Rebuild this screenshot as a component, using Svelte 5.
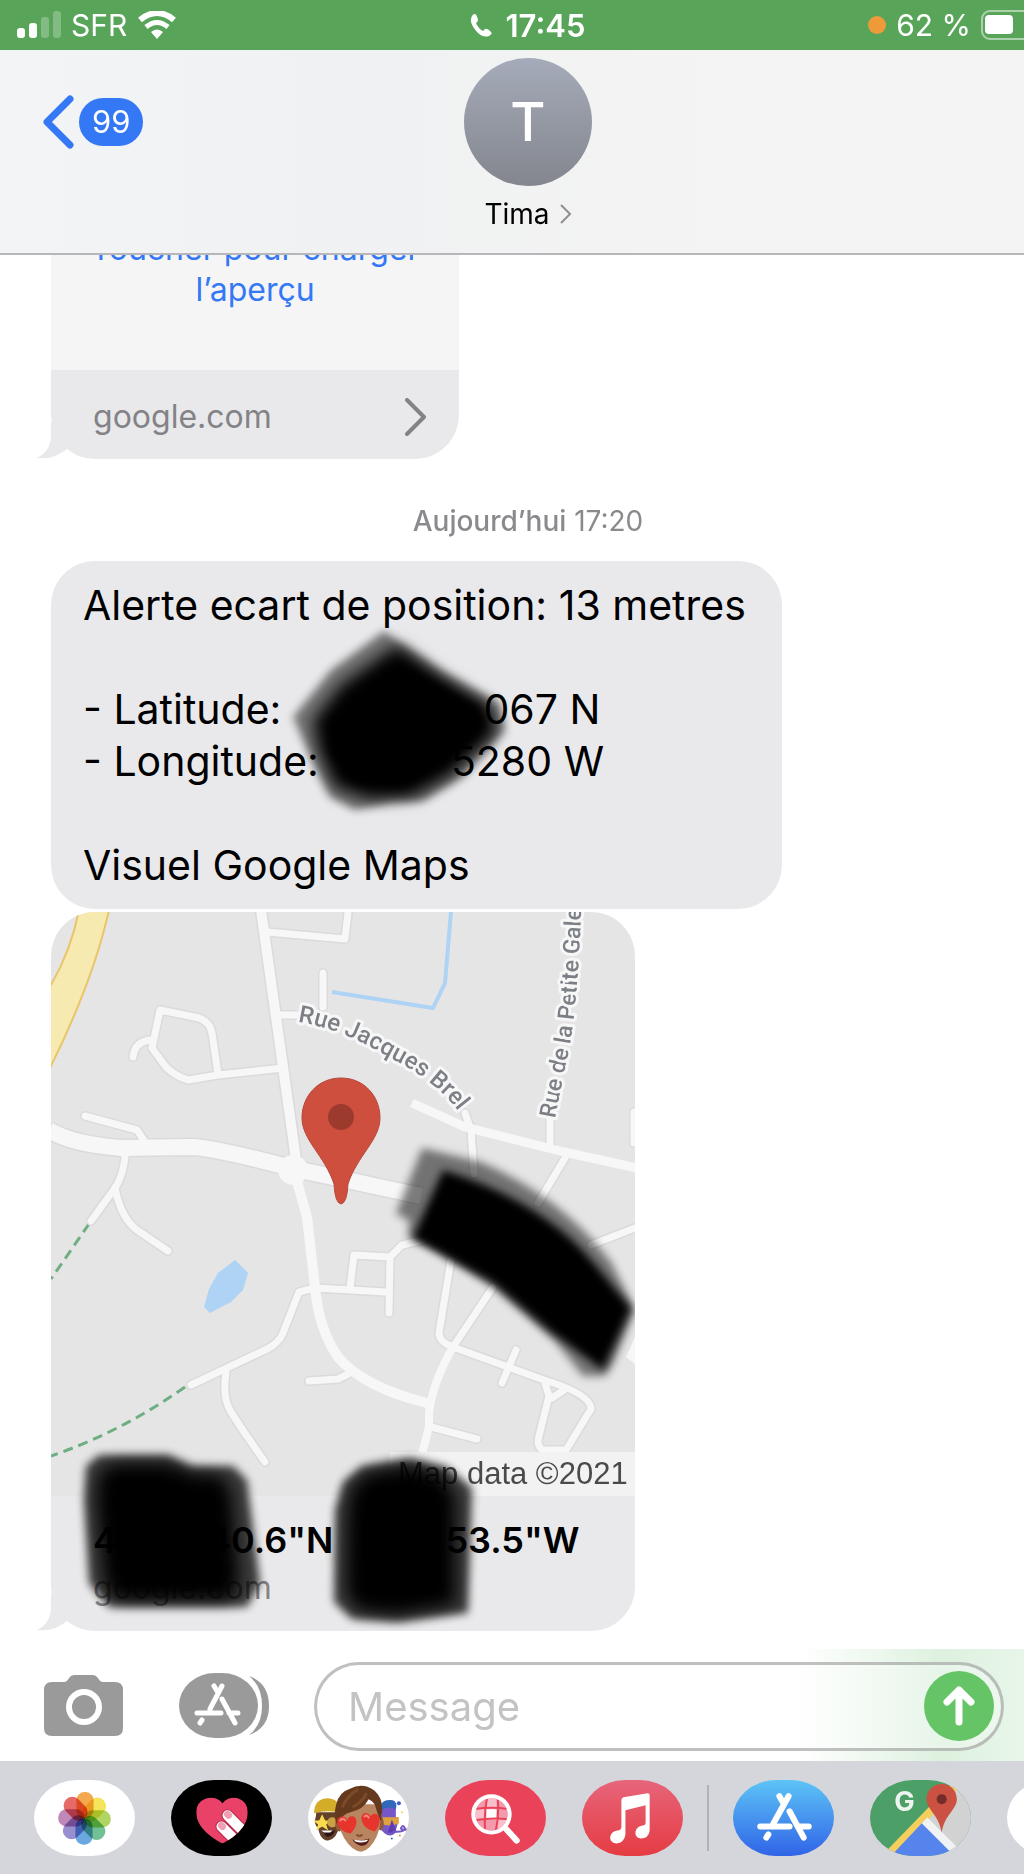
<script>
	let message = '';

	const contact = { name: 'Tima', initial: 'T' };
	const unread = 99;

	// Petals of the Photos icon, clockwise from the top
	const petals = ['#f3a03c', '#f4e24a', '#a9d152', '#62b98a', '#5b9fdc', '#8d83c9', '#b97bb2', '#e45a56'];

	const roads = [
		'M216 20 L294 27 L297 0',
		'M272 61 V95',
		'M228 103 H252',
		'M232 156 L167 163 L137 168 Q124 164 115 155 L101 136 L109 98 L148 106 Q159 110 161 121 L167 162',
		'M82 145 Q84 129 100 128',
		'M34 204 L86 218 L94 230',
		'M74 245 Q72 264 64 276 L40 309',
		'M64 276 Q70 306 86 318 L117 339',
		'M499 236 V205',
		'M517 241 L487 291',
		'M584 316 L540 333',
		'M414 201 L420 218 L423 262',
		'M299 376 L303 343 L339 345 L338 401',
		'M339 345 L351 333 L372 328',
		'M264 376 L335 380',
		'M400 348 L388 421 Q388 430 402 435 L442 375',
		'M264 376 L248 380 L232 421 Q228 431 216 437 L140 473',
		'M175 461 Q171 486 180 500 L193 520 L214 550',
		'M258 469 L287 467 L301 460',
		'M380 515 L426 527',
		'M465 438 L451 471',
		'M513 478 L501 486',
		'M402 435 L493 468 Q540 482 540 497 L515 538 H492 Q487 536 487 528 L498 484 L493 468',
		'M583 200 V231'
	];

	function sendMessage() {
		message = '';
	}
</script>

<svelte:head>
	<title>Messages</title>
</svelte:head>

{#snippet appStoreMark()}
	<path d="M55 16 L40 43 M46 16 L50 23 M56 31 L70 57 M27 46 H56 M65 46 H75 M35 54 L33 57" />
{/snippet}

{#snippet tail()}
	<svg class="tail" viewBox="0 0 32 37" aria-hidden="true">
		<path d="M14 0 V14 Q13 30 0 36 Q18 38 31 26 V0 Z" fill="#e9e9eb" />
	</svg>
{/snippet}

<div class="phone">
	<div class="status-bar">
		<div class="status-left">
			<svg width="44" height="28" viewBox="0 0 44 28" fill="#fff" aria-hidden="true">
				<rect x="0" y="17" width="8" height="10" rx="3" />
				<rect x="12" y="12" width="8" height="15" rx="3" />
				<rect x="24" y="6" width="8" height="21" rx="3" opacity="0.25" />
				<rect x="36" y="0" width="8" height="27" rx="3" opacity="0.25" />
			</svg>
			<span>SFR</span>
			<svg width="40" height="28" viewBox="0 0 40 28" fill="none" stroke="#fff" aria-hidden="true">
				<path d="M3 9 Q20 -5 37 9" stroke-width="6" />
				<path d="M9 16 Q20 7 31 16" stroke-width="5" />
				<path d="M14 21 Q20 16 26 21 L20 28 Z" fill="#fff" stroke="none" />
			</svg>
		</div>
		<div class="status-center">
			<svg width="22" height="23" viewBox="0 0 22 23" fill="#fff" aria-hidden="true">
				<path d="M1 5 Q2 0 5 0 Q7 1 8 6 Q8 8 6 9 Q8 14 13 17 L15 15 Q17 14 21 18 Q23 20 19 22 Q13 24 7 18 Q0 10 1 5 Z" />
			</svg>
			<span>17:45</span>
		</div>
		<div class="status-right">
			<i class="mic-dot"></i>
			<span>62 %</span>
			<svg width="43" height="30" viewBox="0 0 43 30" aria-hidden="true">
				<rect x="1" y="1" width="60" height="28" rx="8" fill="none" stroke="#fff" stroke-opacity="0.5" stroke-width="2" />
				<rect x="4" y="5" width="28" height="19" rx="4" fill="#fff" />
			</svg>
		</div>
	</div>

	<header>
		<button class="back" aria-label="Retour">
			<svg width="34" height="56" viewBox="0 0 34 56" fill="none" aria-hidden="true">
				<path d="M30 5 L7 28 L30 51" stroke="#3478f6" stroke-width="7" stroke-linecap="round" stroke-linejoin="round" />
			</svg>
			<span class="badge">{unread}</span>
		</button>
		<button class="contact">
			<span class="avatar">{contact.initial}</span>
			<span class="name">
				{contact.name}
				<svg width="12" height="20" viewBox="0 0 12 20" fill="none" aria-hidden="true">
					<path d="M1 1 L10 10 L1 19" stroke="#8e8e93" stroke-width="2" />
				</svg>
			</span>
		</button>
	</header>

	<main>
		<div class="card preview">
			{@render tail()}
			<button class="load">Toucher pour charger l’aperçu</button>
			<a class="link-footer" href="https://google.com">
				google.com
				<svg width="22" height="38" viewBox="0 0 22 38" fill="none" aria-hidden="true">
					<path d="M2 2 L19 19 L2 36" stroke="#838387" stroke-width="4" stroke-linecap="round" stroke-linejoin="round" />
				</svg>
			</a>
		</div>

		<p class="date"><b>Aujourd’hui</b> 17:20</p>

		<div class="bubble">
			<p>Alerte ecart de position: 13 metres</p>
			<br />
			<p>- Latitude:<span class="gap lat"></span>067 N</p>
			<p>- Longitude:<span class="gap long"></span>5280 W</p>
			<br />
			<p>Visuel Google Maps</p>
			<svg class="strokes" viewBox="0 0 729 348" aria-hidden="true">
				<defs>
					<filter id="soft" x="-20%" y="-20%" width="140%" height="140%"><feGaussianBlur stdDeviation="4" /></filter>
					<filter id="softer" x="-20%" y="-20%" width="140%" height="140%"><feGaussianBlur stdDeviation="8" /></filter>
				</defs>
				<path d="M333 70 L391 110 L448 142 L454 169 L411 216 L372 240 L342 241 L304 249 L279 236 L262 202 L242 156 L280 109 Z" opacity="0.5" filter="url(#soft)" />
				<path d="M346 84 L391 116 L440 146 L445 172 L400 214 L360 236 L318 238 L284 226 L268 190 L262 160 L290 124 Z" filter="url(#softer)" />
				<path d="M352 104 L428 146 L432 164 L390 204 L350 226 L304 220 L280 192 L282 160 Z" filter="url(#soft)" />
			</svg>
		</div>

		<div class="card place">
			{@render tail()}
			<svg class="map" viewBox="0 0 584 584" role="img" aria-label="Google Maps">
				<defs>
					<path id="brel" d="M247 110 Q290 116 343 148 Q388 171 411 204" />
					<path id="galerie" d="M504 207 Q511 170 518 138 Q529 80 532 -60" />
				</defs>
				<rect width="584" height="584" fill="#e5e5e5" />
				<path d="M28 -2 Q20 40 -3 78 V160 Q42 70 58 -2 Z" fill="#f6eab0" stroke="#e9c568" stroke-width="2" />
				<path d="M400 0 L394 71 L382 96 L281 80" fill="none" stroke="#aed3f5" stroke-width="4" />
				<path d="M184 348 L197 361 L192 378 L180 390 L159 401 L153 395 L158 377 L167 361 Z" fill="#aed3f5" />
				<g fill="none" stroke="#6fae83" stroke-width="3" stroke-dasharray="10 6">
					<path d="M38 312 L0 367" />
					<path d="M134 475 Q70 520 0 544" />
				</g>
				<g fill="none" stroke-linejoin="round">
					<g stroke="#dadadf">
						{#each roads as d}
							<path {d} stroke-width="10" stroke-linecap="round" />
						{/each}
						<path d="M210 -2 L232 155 L245 248" stroke-width="13" />
						<path d="M-2 218 Q20 232 70 236 L141 235 Q165 236 240 256 L370 284" stroke-width="19" />
					</g>
					<g stroke="#f7f7f7">
						{#each roads as d}
							<path {d} stroke-width="7" stroke-linecap="round" />
						{/each}
						<path d="M210 -2 L232 155 L245 248" stroke-width="10" />
						<path d="M244 262 L256 305 L264 375 Q268 418 287 445 Q312 475 376 491" stroke-width="10" />
						<path d="M402 435 Q382 470 378 500 V515 L370 546" stroke-width="8" />
						<path d="M361 191 L414 215 L513 240 L590 257" stroke-width="9" />
						<path d="M-2 218 Q20 232 70 236 L141 235 Q165 236 240 256 L370 284" stroke-width="16" />
					</g>
				</g>
				<circle cx="242" cy="258" r="15" fill="#f7f7f7" />
				<path d="M575 445 L584 425 V452 Z" fill="#f7f7f7" />
				<text class="street"><textPath href="#brel">Rue Jacques Brel</textPath></text>
				<text class="street small"><textPath href="#galerie">Rue de la Petite Gale</textPath></text>
				<path
					d="M290 166 C313 166 329 184 329 206 C329 228 306 244 297 272 Q296 291 290 292 Q284 291 283 272 C274 244 251 228 251 206 C251 184 267 166 290 166 Z"
					fill="#cf4f3f"
					stroke="#b5493c"
				/>
				<circle cx="290" cy="205" r="13" fill="#9c3a2e" />
				<rect x="339" y="540" width="245" height="44" fill="#f2f2f2" />
				<text class="credit" x="347" y="572">Map data ©2021</text>
			</svg>
			<div class="caption">
				<strong>4<span class="gap deg"></span>40.6"N<span class="gap west"></span>53.5"W</strong>
				<a href="https://google.com">google.com</a>
			</div>
			<svg class="strokes" viewBox="0 0 584 719" aria-hidden="true">
				<path d="M371 236 L430 250 Q512 286 560 350 L584 398 L562 452 L554 464 L532 464 L505 430 L442 375 L384 338 L357 326 L358 308 L345 302 Z" opacity="0.5" filter="url(#soft)" />
				<path d="M392 258 Q490 288 542 350 L580 396 L552 458 L500 420 L442 371 L362 326 Z" filter="url(#soft)" />
				<path d="M48 543 L117 543 L141 554 L182 554 L196 568 L209 671 L196 695 L58 695 L38 671 L33 588 L35 554 Z" opacity="0.75" filter="url(#soft)" />
				<path d="M62 552 L117 552 L141 562 L170 564 L180 580 L188 668 L180 688 L66 688 L54 671 L46 588 L48 562 Z" filter="url(#softer)" />
				<path d="M311 554 L359 546 L396 555 L421 576 L417 701 L347 710 L301 707 L283 690 L284 598 L292 570 Z" opacity="0.75" filter="url(#soft)" />
				<path d="M316 562 L359 554 L390 564 L404 582 L404 692 L347 702 L308 698 L296 682 L297 598 L302 575 Z" filter="url(#softer)" />
			</svg>
		</div>
	</main>

	<form class="composer" on:submit|preventDefault={sendMessage}>
		<button type="button" class="tool" aria-label="Appareil photo">
			<svg width="80" height="62" viewBox="0 0 80 62" fill="#9a9a9a" aria-hidden="true">
				<path d="M8 7 H20 Q23 7 25 3 Q27 0 30 0 H49 Q52 0 54 3 Q56 7 59 7 H71 Q79 7 79 15 V53 Q79 61 71 61 H8 Q0 61 0 53 V15 Q0 7 8 7 Z" />
				<circle cx="40" cy="32" r="15" fill="none" stroke="#fff" stroke-width="6" />
			</svg>
		</button>
		<button type="button" class="tool apps" aria-label="Apps">
			<svg width="90" height="66" viewBox="0 0 90 66" aria-hidden="true">
				<path d="M70 3 Q90 10 90 33 Q90 55 70 62 Q83 52 83 33 Q83 13 70 3 Z" fill="#9a9a9a" />
				<rect width="79" height="65" rx="36" ry="33" fill="#9a9a9a" />
				<path
					d="M43 13 L31 36 M35 13 L38 18 M43 26 L56 50 M18 40 H42 M50 40 H59 M23 47 L21 50"
					fill="none"
					stroke="#fff"
					stroke-width="5"
					stroke-linecap="round"
				/>
			</svg>
		</button>
		<div class="field">
			<input type="text" aria-label="Message" placeholder="Message" bind:value={message} />
			<button class="send" aria-label="Envoyer">
				<svg width="70" height="70" viewBox="0 0 70 70" fill="none" aria-hidden="true">
					<path d="M35 51 V20 M23 31 L35 19 L47 31" stroke="#fff" stroke-width="7" stroke-linecap="round" stroke-linejoin="round" />
				</svg>
			</button>
		</div>
	</form>

	<nav class="drawer">
		<div class="group">
			<button class="app white" aria-label="Photos">
				<svg viewBox="0 0 100 76" aria-hidden="true">
					{#each petals as color, i}
						<rect class="petal" x="42" y="12" width="17" height="26" rx="8" fill={color} transform="rotate({i * 45} 50 38)" />
					{/each}
				</svg>
			</button>
			<button class="app black" aria-label="Digital Touch">
				<svg viewBox="0 0 100 76" aria-hidden="true">
					<clipPath id="heart"><path d="M51 63 C38 56 25 46 25 32 C25 17 43 13 51 23 C59 13 76 17 76 32 C76 46 64 56 51 63 Z" /></clipPath>
					<g clip-path="url(#heart)">
						<rect width="100" height="76" fill="#ea4168" />
						<path d="M56 35 L78 57 M50 46 L72 68" stroke="#b92a4c" stroke-width="12" stroke-linecap="round" />
						<path d="M56 35 L78 57 M50 46 L72 68" stroke="#fff" stroke-width="10" stroke-linecap="round" />
						<path d="M56 34 L57 35 M50 45 L51 46" stroke="#f0a0b4" stroke-width="7" stroke-linecap="round" />
					</g>
				</svg>
			</button>
			<button class="app white" aria-label="Memoji">
				<svg viewBox="0 0 100 76" aria-hidden="true">
					<path d="M8 35 Q5 45 10 47 Q12 60 20 60 Q29 58 31 45 V32 H8 Z" fill="#634028" />
					<path d="M6 33 Q6 18 20 18 Q32 19 33 33 Q20 29 6 33 Z" fill="#d5ac28" />
					<path d="M14 34 L17 40 L23 40 L18 44 L20 50 L14 46 L8 50 L10 44 L5 40 L11 40 Z" fill="#f8dc4e" />
					<circle cx="24" cy="42" r="5" fill="#caa144" />
					<path d="M14 50 Q20 53 27 50 Q24 57 18 56 Z" fill="#2d1518" />
					<path d="M13 50 H24 L22 52 H16 Z" fill="#fff" />
					<path d="M73 24 Q80 17 87 24 V37 H89 V43 L86 53 Q80 58 73 50 Z" fill="#7657c7" />
					<path d="M72 25 Q74 19 84 20 Q89 22 87 29 Q79 25 72 30 Z" fill="#3069b9" />
					<path d="M72 37 H90 V43 Q80 47 72 43 Z" fill="#dfa13d" />
					<path d="M83 39 L88 52 H79 Z" fill="#5d3bb2" />
					<path d="M84 51 Q95 52 96 48 Q94 43 92 48 Q93 50 98 49" fill="none" stroke="#7657c7" stroke-width="2" />
					<circle cx="90" cy="23" r="2" fill="#3b5fcf" />
					<circle cx="93" cy="32" r="1" fill="#e8d44c" />
					<circle cx="83" cy="58" r="1" fill="#3b5fcf" />
					<circle cx="91" cy="55" r="1" fill="#e8913c" />
					<ellipse cx="31" cy="44" rx="4" ry="7" fill="#8f5a3a" />
					<ellipse cx="72" cy="43" rx="3" ry="7" fill="#8f5a3a" />
					<path d="M30 28 Q29 47 36 58 Q44 71 53 71 Q62 69 68 56 Q74 42 72 24 H32 Z" fill="#b98560" />
					<path d="M28 43 Q25 34 28 24 Q31 12 41 9 Q54 2 65 10 Q77 19 72 41 Q69 34 66 24 Q63 20 60 19 Q55 29 42 32 Q33 34 31 43 Z" fill="#65391d" />
					<path d="M34 27 Q38 16 50 9 M44 27 Q54 22 58 13" fill="none" stroke="#7a4a29" stroke-width="3" />
					<path d="M42 53 C33 51 28 45 29 40 C31 34 38 36 39 40 C40 34 48 35 48 41 C48 46 45 50 42 53 Z" fill="#e5352d" />
					<path d="M66 51 C57 49 52 43 53 36 C55 31 60 32 62 36 C65 31 71 34 71 39 C71 44 69 48 66 51 Z" fill="#e5352d" />
					<path d="M32 40 Q34 37 37 40 M56 36 Q58 34 60 37" fill="none" stroke="#fa897c" stroke-width="2" stroke-linecap="round" />
					<path d="M48 54 Q51 57 54 54" fill="none" stroke="#8a5030" stroke-width="2" />
					<path d="M44 59 Q53 61 61 58 Q59 66 52 65 Q47 64 44 59 Z" fill="#561c1b" />
					<path d="M45 59 Q53 61 60 59 L58 61 Q52 63 47 61 Z" fill="#fff" />
				</svg>
			</button>
			<button class="app red" aria-label="#images">
				<svg viewBox="0 0 100 76" fill="none" aria-hidden="true">
					<clipPath id="lens"><circle cx="46" cy="34" r="16" /></clipPath>
					<circle cx="46" cy="34" r="16" fill="#f39aad" />
					<g clip-path="url(#lens)">
						<path d="M41 18 H51 V29 H41 Z M29 29 H41 V39 H29 Z M51 38 H64 V48 H51 Z" fill="#f9c0cb" />
						<rect x="41" y="29" width="10" height="10" fill="#fff" />
						<path d="M42 16 Q38 34 40 52 M52 16 Q54 34 50 52 M28 29 Q46 26 64 29 M28 40 Q46 37 64 39" stroke="#ea4359" stroke-width="2" />
					</g>
					<circle cx="46" cy="34" r="18" stroke="#fff" stroke-width="4" />
					<path d="M60 48 L71 60" stroke="#fff" stroke-width="6" stroke-linecap="round" />
				</svg>
			</button>
			<button class="app music" aria-label="Musique">
				<svg viewBox="0 0 100 76" fill="#fff" aria-hidden="true">
					<path d="M39 20 Q39 18 41 17 L65 13 Q67 13 67 15 V50 Q66 58 58 58 Q52 57 53 51 Q54 46 60 45 Q63 45 63 42 V25 L43 30 V54 Q42 62 34 63 Q27 62 28 56 Q29 51 35 50 Q39 50 39 46 Z" />
				</svg>
			</button>
		</div>
		<span class="divider"></span>
		<div class="group">
			<button class="app store" aria-label="App Store">
				<svg viewBox="0 0 100 76" fill="none" stroke="#fff" stroke-width="6" stroke-linecap="round" aria-hidden="true">
					{@render appStoreMark()}
				</svg>
			</button>
			<button class="app maps" aria-label="Google Maps">
				<svg viewBox="0 0 100 76" aria-hidden="true">
					<path d="M54 41 L90 0 H100 V76 H84 Z" fill="#d1d2d1" />
					<path d="M18 74 L86 4" stroke="#f4cf5d" stroke-width="8" />
					<path d="M52 42 L20 76 H84 Z" fill="#5585ec" />
					<path d="M54 40 L86 72" stroke="#f1f2f3" stroke-width="8" />
					<path d="M71 4 C80 4 86 11 86 19 C86 29 74 34 71 52 C68 34 56 29 56 19 C56 11 62 4 71 4 Z" fill="#cb5243" />
					<circle cx="71" cy="19" r="5" fill="#752d29" />
					<text x="24" y="31">G</text>
				</svg>
			</button>
			<button class="app white" aria-label="Plus"></button>
		</div>
	</nav>
</div>

<style>
	:global(body) {
		margin: 0;
		background: #fff;
	}

	.phone {
		display: flex;
		flex-direction: column;
		height: 100vh;
		overflow: hidden;
		font-family: Inter, 'Liberation Sans', sans-serif;
		color: #000;
	}

	button {
		padding: 0;
		border: 0;
		background: none;
		font: inherit;
		color: inherit;
		cursor: pointer;
	}

	svg {
		display: block;
		flex-shrink: 0;
	}

	p {
		margin: 0;
	}

	a {
		color: inherit;
		text-decoration: none;
	}

	.status-bar {
		display: grid;
		grid-template-columns: 1fr auto 1fr;
		align-items: center;
		height: 50px;
		flex-shrink: 0;
		padding-left: 17px;
		background: #58a55a;
		color: #fff;
		font-size: 30px;
	}

	.status-bar > div {
		display: flex;
		align-items: center;
		gap: 10px;
	}

	.status-bar .status-center {
		gap: 14px;
		padding-left: 14px;
		font-size: 31px;
		font-weight: 600;
	}

	.status-bar .status-right {
		justify-content: flex-end;
	}

	.mic-dot {
		width: 18px;
		height: 18px;
		border-radius: 50%;
		background: #ee9a38;
	}

	header {
		display: grid;
		grid-template-columns: 1fr auto 1fr;
		align-items: start;
		height: 205px;
		box-sizing: border-box;
		flex-shrink: 0;
		padding: 8px 8px 0 40px;
		border-bottom: 2px solid #b7b7bb;
		background: linear-gradient(90deg, #f3f4f5, #f0f1f2 35%, #f4f4f4 75%);
	}

	.back {
		display: flex;
		align-items: center;
		gap: 5px;
		margin-top: 36px;
	}

	.badge {
		padding: 0 13px;
		border-radius: 24px;
		background: #3478f6;
		color: #fff;
		font-size: 31px;
		line-height: 48px;
	}

	.contact {
		display: flex;
		flex-direction: column;
		align-items: center;
		gap: 11px;
	}

	.avatar {
		width: 128px;
		border-radius: 50%;
		background: linear-gradient(#a5abb9, #83868e);
		color: #fff;
		font-size: 54px;
		font-weight: 500;
		line-height: 128px;
	}

	.name {
		display: flex;
		align-items: center;
		gap: 10px;
		font-size: 28px;
		line-height: 34px;
	}

	main {
		display: flex;
		flex: 1;
		flex-direction: column;
		justify-content: flex-end;
		align-items: flex-start;
		min-height: 0;
		overflow: hidden;
		padding: 0 51px 18px;
	}

	.card {
		position: relative;
		flex-shrink: 0;
	}

	.tail {
		position: absolute;
		left: -14px;
		bottom: 0;
		width: 32px;
		height: 37px;
	}

	.preview {
		width: 408px;
		border-radius: 44px;
		color: #838387;
		font-size: 32px;
	}

	.load {
		position: relative;
		width: 100%;
		padding: 60px 32px;
		background: #f5f5f5;
		color: #3478f6;
		line-height: 41px;
	}

	.link-footer {
		position: relative;
		display: flex;
		justify-content: space-between;
		align-items: center;
		padding: 4px 32px 0 42px;
		border-radius: 0 0 44px 44px;
		background: #e9e9eb;
		line-height: 85px;
	}

	.date {
		flex-shrink: 0;
		align-self: center;
		padding: 45px 0 23px 32px;
		color: #8a8a8e;
		font-size: 28px;
		line-height: 34px;
	}

	.date b {
		font-weight: 500;
	}

	.bubble {
		position: relative;
		flex-shrink: 0;
		padding: 18px 36px 18px 32px;
		border-radius: 44px;
		background: #e9e9eb;
		font-size: 41px;
		line-height: 52px;
		white-space: nowrap;
	}

	.strokes {
		position: absolute;
		top: 0;
		left: 0;
		height: 100%;
		pointer-events: none;
	}

	.gap {
		display: inline-block;
	}

	.lat {
		width: 202px;
	}

	.long {
		width: 132px;
	}

	.place {
		width: 584px;
		margin-top: 3px;
	}

	.map {
		position: relative;
		width: 100%;
		border-radius: 44px 44px 0 0;
	}

	.street {
		fill: #7c8086;
		stroke: #f7f7f7;
		stroke-width: 6px;
		stroke-linejoin: round;
		paint-order: stroke;
		font-family: Roboto, sans-serif;
		font-size: 24px;
		font-weight: 500;
	}

	.small {
		font-size: 23px;
	}

	.credit {
		fill: #4a4a4a;
		font-family: 'Liberation Sans', sans-serif;
		font-size: 31px;
	}

	.caption {
		position: relative;
		display: flex;
		flex-direction: column;
		gap: 6px;
		height: 135px;
		box-sizing: border-box;
		padding: 22px 42px 0;
		border-radius: 0 0 44px 44px;
		background: #e9e9eb;
		white-space: nowrap;
	}

	.caption strong {
		font-size: 36px;
		font-weight: 600;
		line-height: 44px;
	}

	.caption a {
		color: #838387;
		font-size: 32px;
		line-height: 40px;
	}

	.deg {
		width: 90px;
	}

	.west {
		width: 112px;
	}

	.composer {
		display: flex;
		align-items: center;
		flex-shrink: 0;
		box-sizing: border-box;
		height: 112px;
		padding: 2px 20px 0 44px;
		background: linear-gradient(90deg, #fff 78%, #ddf1df 92%, #e8f6e9);
	}

	.apps {
		margin-left: 55px;
	}

	.field {
		display: flex;
		flex: 1;
		align-items: center;
		min-width: 0;
		height: 89px;
		box-sizing: border-box;
		margin-left: 45px;
		padding: 0 7px 0 31px;
		border: 3px solid rgba(150, 150, 150, 0.6);
		border-radius: 45px;
		background: rgba(255, 255, 255, 0.3);
	}

	input {
		flex: 1;
		min-width: 0;
		padding: 0;
		border: 0;
		outline: 0;
		background: none;
		font: inherit;
		font-size: 40px;
	}

	input::placeholder {
		color: #c3c3c5;
		opacity: 1;
	}

	.send {
		border-radius: 50%;
		background: #64c466;
	}

	.drawer {
		display: flex;
		gap: 24px;
		height: 113px;
		box-sizing: border-box;
		flex-shrink: 0;
		padding: 19px 0 0 34px;
		background: #d5d6dc;
	}

	.group {
		display: flex;
		gap: 36px;
	}

	.divider {
		flex-shrink: 0;
		width: 2px;
		height: 66px;
		margin-top: 5px;
		background: #b1b2b7;
	}

	.app {
		flex-shrink: 0;
		width: 101px;
		height: 76px;
		border-radius: 43px / 38px;
		overflow: hidden;
	}

	.white {
		background: #fff;
	}

	.black {
		background: #000;
	}

	.red {
		background: #ea4359;
	}

	.music {
		background: linear-gradient(#e7657a, #e53c43);
	}

	.store {
		background: linear-gradient(#5dc4f6, #3064e7);
	}

	.maps {
		background: #4c9f67;
	}

	.maps text {
		fill: #eef4ef;
		font-size: 27px;
		font-weight: 700;
	}

	.petal {
		mix-blend-mode: multiply;
		opacity: 0.9;
	}
</style>
